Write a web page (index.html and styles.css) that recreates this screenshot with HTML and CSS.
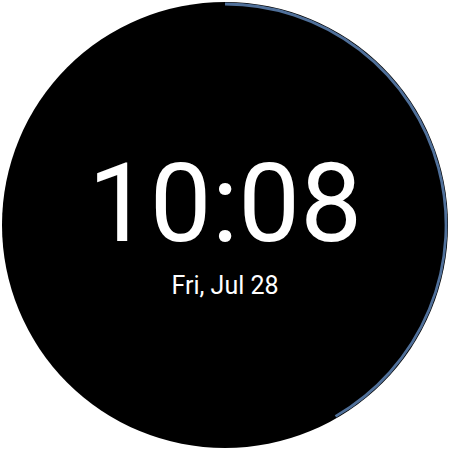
FILE: index.html
```html
<!DOCTYPE html>
<html>
<head>
<meta charset="utf-8">
<link rel="stylesheet" href="styles.css">
</head>
<body>
<div class="watch">
  <svg class="arc" width="446" height="446" viewBox="0 0 446 446">
    <path d="M223 2 A221 221 0 0 1 333.5 414.4" fill="none" stroke="#50709a" stroke-width="2.8"/>
  </svg>
  <div class="time">10:08</div>
  <div class="date">Fri, Jul 28</div>
</div>
</body>
</html>
```
FILE: styles.css
```css
html, body {
  margin: 0;
  padding: 0;
  background: #ffffff;
}
body {
  width: 450px;
  height: 450px;
  padding: 2px;
  box-sizing: border-box;
  font-family: Roboto, "Noto Sans", sans-serif;
}
.watch {
  position: relative;
  width: 446px;
  height: 446px;
  border-radius: 50%;
  background: #000000;
  box-sizing: border-box;
  padding-top: 146.6px;
  text-align: center;
  color: #ffffff;
}
.arc {
  position: absolute;
  left: 0;
  top: 0;
}
.time {
  font-size: 110px;
  line-height: 110px;
  font-weight: 400;
}
.date {
  margin-top: 14.7px;
  font-size: 25px;
  line-height: 25px;
}
```
